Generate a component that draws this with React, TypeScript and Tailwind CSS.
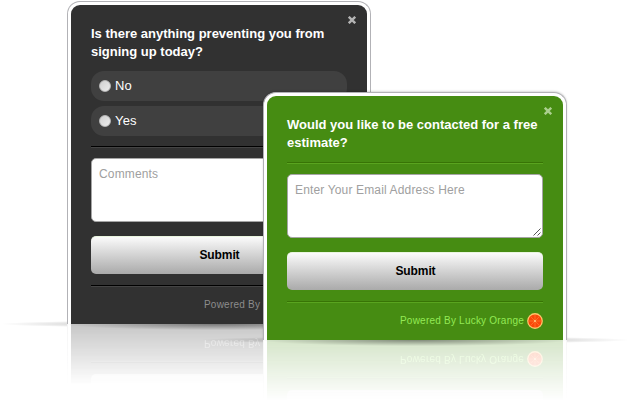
import type { ReactNode } from 'react';

type Theme = 'dark' | 'green';

const themes = {
  dark: {
    panel: 'bg-[#313131]',
    close: 'text-[#b5b5b5]',
    divider: 'border-t-black border-b-[#444444]',
    footer: 'text-[#8c8c8c]',
    fade: 'opacity-[0.27]',
    edge: '',
  },
  green: {
    panel: 'bg-[#468c12]',
    close: 'text-[#acd08f]',
    divider: 'border-t-[#387405] border-b-[#59a41f]',
    footer: 'text-[#93ea55]',
    fade: 'opacity-[0.22]',
    edge: 'shadow-[0_-1px_2px_rgba(0,0,0,0.15)]',
  },
};

function CloseIcon({ className }: { className: string }) {
  return (
    <svg viewBox="0 0 8 8" className={`h-2 w-2 ${className}`} fill="none" stroke="currentColor" strokeWidth="2.4">
      <path d="M.8 .8 7.2 7.2M7.2 .8 .8 7.2" />
    </svg>
  );
}

function OrangeIcon() {
  return (
    <svg viewBox="0 0 16 16" className="h-4 w-4 shrink-0">
      <circle cx="8" cy="8" r="7.9" fill="#ffc56b" />
      <circle cx="8" cy="8" r="6.6" fill="#fb4709" />
      <path d="M8 1.6v12.8M1.6 8h12.8M3.5 3.5l9 9M12.5 3.5l-9 9" stroke="#ff8b3c" strokeWidth=".55" />
      <circle cx="8" cy="8" r=".9" fill="#ffd08a" />
    </svg>
  );
}

function Divider({ theme }: { theme: Theme }) {
  return <div className={`h-0.5 shrink-0 border-y ${themes[theme].divider}`} />;
}

function Option({ label }: { label: string }) {
  return (
    <div className="flex h-[30px] shrink-0 items-center gap-1 rounded-[13px] bg-[#404040] pl-2 text-[13px] tracking-[0.2px] text-white">
      <span className="h-3 w-3 rounded-full border border-[#b8b8b8] bg-linear-to-br from-[#d0d0d0] to-[#ececec]" />
      <span>{label}</span>
    </div>
  );
}

function Footer({ theme }: { theme: Theme }) {
  return (
    <div className="flex flex-col">
      <Divider theme={theme} />
      <div className={`flex h-[37px] items-start justify-end gap-[3px] pt-2.5 text-[10px] leading-3 tracking-[0.22px] ${themes[theme].footer}`}>
        <span className="pt-0.5">Powered By Lucky Orange</span>
        <OrangeIcon />
      </div>
    </div>
  );
}

interface CardProps {
  theme: Theme;
  title: ReactNode;
  placeholder: string;
  options?: string[];
}

function Card({ theme, title, placeholder, options = [] }: CardProps) {
  const t = themes[theme];
  return (
    <div className={`w-[304px] rounded-t-[13px] border border-b-0 border-[#b2b2b6] bg-white px-[3px] pt-[3px] ${t.edge}`}>
      <div className={`relative flex flex-col gap-[11px] rounded-t-[9px] px-5 pt-5 ${t.panel}`}>
        <div className="absolute top-[11px] right-[11px]">
          <CloseIcon className={t.close} />
        </div>
        <h2 className="h-[35px] text-[13px] leading-[18px] font-bold whitespace-nowrap text-white">{title}</h2>
        {options.length > 0 && (
          <div className="flex h-16 flex-col gap-[5px]">
            {options.map((o) => (
              <Option key={o} label={o} />
            ))}
          </div>
        )}
        <div className="flex flex-col gap-2.5">
          <Divider theme={theme} />
          <div className="flex flex-col gap-3.5">
            <div className="flex h-16 justify-between rounded-[5px] border border-[#a5a5a5] bg-white pl-[7px] text-xs leading-4 tracking-[0.15px] text-[#a0a0a0]">
              <span className="pt-[7px]">{placeholder}</span>
              <svg viewBox="0 0 8 8" className="mr-px mb-px h-2 w-2 self-end" stroke="#444" strokeWidth=".9">
                <path d="M.5 7.5l7-7M4.5 7.5l3-3" />
              </svg>
            </div>
            <div className="flex h-[38px] items-center justify-center rounded-[5px] border-t border-[#e9f5df] bg-linear-to-b from-[#fbfbfb] to-[#aaaaaa] pb-0.5 pl-px text-xs font-bold tracking-[-0.1px] text-black">
              Submit
            </div>
          </div>
        </div>
        <Footer theme={theme} />
      </div>
    </div>
  );
}

function Reflection({ theme }: { theme: Theme }) {
  const t = themes[theme];
  return (
    <div className="h-[68px] bg-white" aria-hidden="true">
      <div className={`h-full mask-linear-180 mask-linear-from-0% mask-linear-to-90% ${t.fade}`}>
        <div className="h-full -scale-y-100 border-x border-[#d8d8da] px-[3px]">
          <div className={`flex h-full flex-col gap-[11px] px-5 ${t.panel}`}>
            <div className="h-[18px] rounded-b-[5px] bg-[#b8b8b8]" />
            <Footer theme={theme} />
          </div>
        </div>
      </div>
    </div>
  );
}

function Popup(props: CardProps) {
  return (
    <div>
      <Card {...props} />
      <div className="grid *:col-start-1 *:row-start-1">
        <Reflection theme={props.theme} />
        <div className="relative h-1.5 bg-[radial-gradient(ellipse_at_top,rgba(0,0,0,0.4),transparent_72%)]" />
      </div>
    </div>
  );
}

function GroundShadow({ className }: { className: string }) {
  return (
    <div
      className={`absolute bg-[radial-gradient(closest-side,rgba(0,0,0,0.4),rgba(0,0,0,0.2)_45%,rgba(0,0,0,0.1)_75%,transparent)] ${className}`}
    />
  );
}

export default function App() {
  return (
    <main className="relative h-[411px] w-[635px] overflow-hidden bg-white font-['Liberation_Sans',Arial,sans-serif]">
      <GroundShadow className="top-[320px] left-0 h-2 w-[440px]" />
      <div className="absolute top-px left-[67px]">
        <Popup
          theme="dark"
          title={
            <>
              Is there anything preventing you from
              <br />
              signing up today?
            </>
          }
          options={['No', 'Yes']}
          placeholder="Comments"
        />
      </div>
      <GroundShadow className="top-[336px] left-[200px] h-2 w-[430px]" />
      <div className="absolute top-[92px] left-[263px]">
        <Popup
          theme="green"
          title={
            <>
              Would you like to be contacted for a free
              <br />
              estimate?
            </>
          }
          placeholder="Enter Your Email Address Here"
        />
      </div>
    </main>
  );
}
